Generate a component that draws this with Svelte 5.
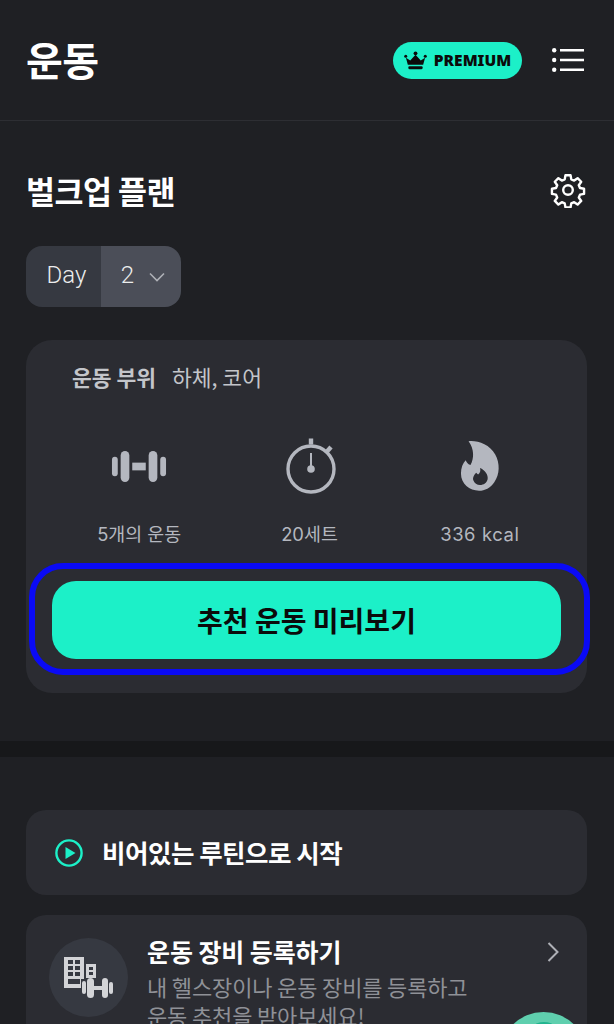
<script>
	const stats = [
		{ icon: 'dumbbell', label: '5개의 운동' },
		{ icon: 'timer', label: '20세트' },
		{ icon: 'flame', label: '336 kcal' }
	];
</script>

<div class="page">
	<header class="top">
		<h1>운동</h1>
		<div class="top-actions">
			<div class="premium">
				<svg width="23" height="19" viewBox="0 0 24 19" fill="#0b0b0b">
					<circle cx="12" cy="2" r="2" />
					<circle cx="1.8" cy="5" r="1.6" />
					<circle cx="22.2" cy="5" r="1.6" />
					<path d="M2 6.5l4.5 3L12 3.5l5.5 6 4.5-3-2 7.5H4z" />
					<rect x="4.5" y="15.5" width="15" height="3" rx="1.2" />
				</svg>
				<span>PREMIUM</span>
			</div>
			<svg width="32" height="24" viewBox="0 0 32 24" fill="none" stroke="#fff">
				<circle cx="2.2" cy="2.2" r="2.2" fill="#fff" stroke="none" />
				<circle cx="2.2" cy="12" r="2.2" fill="#fff" stroke="none" />
				<circle cx="2.2" cy="21.8" r="2.2" fill="#fff" stroke="none" />
				<path d="M8 2.2h24M8 12h24M8 21.8h24" stroke-width="2.6" />
			</svg>
		</div>
	</header>

	<section class="plan">
		<div class="plan-head">
			<h2>벌크업 플랜</h2>
			<svg width="36" height="36" viewBox="0 0 24 24" fill="none" stroke="#fff" stroke-width="1.6" stroke-linejoin="round">
				<circle cx="12" cy="12" r="3.2" />
				<path d="M10.3 2.2h3.4l.5 2.7 1.9.8 2.3-1.6 2.4 2.4-1.6 2.3.8 1.9 2.7.5v3.4l-2.7.5-.8 1.9 1.6 2.3-2.4 2.4-2.3-1.6-1.9.8-.5 2.7h-3.4l-.5-2.7-1.9-.8-2.3 1.6-2.4-2.4 1.6-2.3-.8-1.9-2.7-.5v-3.4l2.7-.5.8-1.9-1.6-2.3 2.4-2.4 2.3 1.6 1.9-.8z" />
			</svg>
		</div>

		<div class="day">
			<span class="day-label">Day</span>
			<span class="day-value">
				2
				<svg width="16" height="10" viewBox="0 0 16 10" fill="none" stroke="#aeb0b6" stroke-width="1.6">
					<path d="M1 1.5l7 7 7-7" />
				</svg>
			</span>
		</div>

		<div class="summary">
			<p class="parts"><strong>운동 부위</strong><span>하체, 코어</span></p>
			<div class="stats">
				{#each stats as stat}
					<div class="stat">
						<div class="stat-icon">
							{#if stat.icon === 'dumbbell'}
								<svg width="56" height="33" viewBox="0 0 58 34" fill="#b4b7bf">
									<rect x="1" y="7" width="6" height="20" rx="3" />
									<rect x="10" y="1" width="9" height="32" rx="4.5" />
									<rect x="22" y="13" width="14" height="8" />
									<rect x="39" y="1" width="9" height="32" rx="4.5" />
									<rect x="51" y="7" width="6" height="20" rx="3" />
								</svg>
							{:else if stat.icon === 'timer'}
								<svg class="timer" width="50" height="56" viewBox="0 0 50 56" fill="none" stroke="#b4b7bf">
									<circle cx="25" cy="31" r="23" stroke-width="3.4" />
									<path d="M25 0.5v6M45 9l-4 4.5" stroke-width="4.4" />
									<path d="M25 15v15" stroke-width="2" />
									<circle cx="25" cy="31" r="3.8" fill="#b4b7bf" stroke="none" />
								</svg>
							{:else}
								<svg width="40" height="52" viewBox="0 0 42 54" fill="#b4b7bf">
									<path fill-rule="evenodd" d="M9 1c9-1 22 3 28 14 5 9 5 21-1 29-4 6-10 9-16 9C10 53 1 46 1 35c0-6 2-11 5-14 1 2 2 4 5 5C15 19 15 9 9 1zM21 29c1 3 0 5-2 7-1-1-1-1-2-2-2 2-4 5-3 8 1 3 4 5 7 5 4 0 7-2 8-6 1-5-3-10-8-12z" />
								</svg>
							{/if}
						</div>
						<span class:latin={stat.icon === 'flame'}>{stat.label}</span>
					</div>
				{/each}
			</div>
			<button class="preview">추천 운동 미리보기</button>
			<div class="highlight"></div>
		</div>
	</section>

	<div class="band"></div>

	<section class="more">
		<div class="empty-routine">
			<svg width="28" height="28" viewBox="0 0 28 28">
				<circle cx="14" cy="14" r="12.6" fill="none" stroke="#1cf0c8" stroke-width="2.4" />
				<path d="M10.5 8l10 6-10 6z" fill="#1cf0c8" />
			</svg>
			<span>비어있는 루틴으로 시작</span>
		</div>

		<div class="equipment">
			<div class="gear-badge">
				<svg width="49" height="41" viewBox="0 0 49 41" fill="#d3d4d7">
					<path fill-rule="evenodd" d="M0 0h20v31H0zM4 3v4h5V3zm7 0v4h5V3zM4 9v4h5V9zm7 0v4h5V9zM4 15v4h5v-4zm7 0v4h5v-4zM4 22v5h12v-5z" />
					<path fill-rule="evenodd" d="M22 7h10v14H22zM25 10v3h4v-3zm0 5v3h4v-3z" />
					<rect x="17" y="22" width="24" height="19" fill="#363941" />
					<rect x="18" y="24" width="4" height="13" rx="2" />
					<rect x="23" y="21" width="7" height="20" rx="3.5" />
					<rect x="30" y="29" width="8" height="4" />
					<rect x="38" y="21" width="6" height="20" rx="3" />
					<rect x="45" y="25" width="4" height="12" rx="2" />
				</svg>
			</div>
			<div class="equipment-text">
				<h3>운동 장비 등록하기</h3>
				<p>내 헬스장이나 운동 장비를 등록하고<br />운동 추천을 받아보세요!</p>
			</div>
			<svg class="chevron" width="12" height="20" viewBox="0 0 12 20" fill="none" stroke="#aeb0b6" stroke-width="2">
				<path d="M1.5 1l9 9-9 9" />
			</svg>
			<div class="fab"><div class="fab-core"></div></div>
		</div>
	</section>
</div>

<style>
	:global(body) {
		background: #1f2024;
		overflow: hidden;
	}
	.page {
		height: 1024px;
		overflow: hidden;
		font-family: 'Noto Sans CJK KR', 'Noto Sans', sans-serif;
		color: #fff;
	}
	h1,
	h2,
	h3,
	p {
		margin: 0;
	}
	.top {
		height: 121px;
		box-sizing: border-box;
		padding: 0 30px 0 26px;
		display: flex;
		align-items: center;
		justify-content: space-between;
		border-bottom: 1px solid #2d2e33;
	}
	h1 {
		font-size: 40px;
		font-weight: 700;
		line-height: 1;
		letter-spacing: -0.5px;
		margin-top: -3px;
	}
	.top-actions {
		display: flex;
		align-items: center;
		gap: 30px;
	}
	.premium {
		width: 129px;
		height: 37px;
		border-radius: 19px;
		background: #1cf0c8;
		display: flex;
		align-items: center;
		justify-content: center;
		gap: 7px;
		color: #0b0b0b;
	}
	.premium span {
		font-family: 'Noto Sans', sans-serif;
		font-size: 15.5px;
		font-weight: 900;
	}
	.plan {
		height: 620px;
		box-sizing: border-box;
		padding: 49px 27px 0 26px;
	}
	.plan-head {
		display: flex;
		align-items: center;
		justify-content: space-between;
		height: 40px;
		padding-right: 1px;
	}
	h2 {
		font-size: 31.5px;
		font-weight: 700;
		letter-spacing: -0.5px;
		line-height: 40px;
	}
	.day {
		margin-top: 36px;
		width: 155px;
		height: 61px;
		border-radius: 16px;
		overflow: hidden;
		display: flex;
		font-size: 24px;
		font-family: 'Roboto', sans-serif;
		font-weight: 300;
		color: #eceded;
	}
	.day-label {
		width: 75px;
		box-sizing: border-box;
		padding: 0 0 3px 6px;
		background: #363941;
		display: flex;
		align-items: center;
		justify-content: center;
	}
	.day-value {
		flex: 1;
		box-sizing: border-box;
		padding: 0 0 3px 4px;
		background: #4b4e58;
		display: flex;
		align-items: center;
		justify-content: center;
		gap: 15px;
	}
	.day-value svg {
		margin-top: 3px;
	}
	.summary {
		position: relative;
		margin-top: 33px;
		height: 353px;
		box-sizing: border-box;
		padding: 22px 26px 0;
		border-radius: 26px;
		background: #2b2c32;
	}
	.parts {
		display: flex;
		align-items: center;
		gap: 16px;
		padding-left: 20px;
		font-size: 21.5px;
		color: #c3c5ca;
		height: 29px;
	}
	.parts strong {
		font-weight: 700;
	}
	.stats {
		margin: 47px -4px 0 2px;
		display: grid;
		grid-template-columns: repeat(3, 1fr);
	}
	.stat {
		display: flex;
		flex-direction: column;
		align-items: center;
		gap: 27px;
		font-size: 18.4px;
		color: #b4b7bf;
	}
	.stat-icon {
		height: 56px;
		display: flex;
		align-items: center;
		justify-content: center;
	}
	.timer {
		margin-left: 4px;
	}
	.stat span {
		line-height: 26px;
		font-family: 'Inter', 'Noto Sans CJK KR', sans-serif;
	}
	.stat span.latin {
		letter-spacing: 0.6px;
	}
	.preview {
		display: block;
		margin-top: 34px;
		width: 509px;
		height: 78px;
		border: 0;
		border-radius: 24px;
		background: #1cf0c8;
		color: #0b0b0b;
		font: 700 28px 'Noto Sans CJK KR', sans-serif;
	}
	.highlight {
		position: absolute;
		left: 3px;
		top: 223px;
		width: 561px;
		height: 112px;
		box-sizing: border-box;
		border: 6px solid #0a0af5;
		border-radius: 34px;
	}
	.band {
		height: 16px;
		background: #17181a;
	}
	.more {
		padding: 53px 27px 0 26px;
		display: flex;
		flex-direction: column;
		gap: 20px;
	}
	.empty-routine {
		height: 85px;
		box-sizing: border-box;
		padding-left: 29px;
		border-radius: 20px;
		background: #2b2c32;
		display: flex;
		align-items: center;
		gap: 19px;
		font-size: 25.5px;
		font-weight: 700;
		letter-spacing: -0.5px;
	}
	.empty-routine span {
		padding-bottom: 3px;
	}
	.equipment {
		position: relative;
		height: 200px;
		box-sizing: border-box;
		padding: 22px 23px 23px;
		border-radius: 20px;
		background: #2b2c32;
		display: flex;
		gap: 19px;
		overflow: hidden;
	}
	.gear-badge {
		width: 79px;
		height: 79px;
		margin-top: 1px;
		border-radius: 50%;
		background: #363941;
		display: flex;
		align-items: center;
		justify-content: center;
		flex: none;
	}
	.equipment-text {
		flex: 1;
	}
	h3 {
		font-size: 25px;
		font-weight: 700;
		line-height: 28px;
		letter-spacing: -0.1px;
	}
	.equipment-text p {
		margin-top: 7px;
		font-size: 22px;
		line-height: 29px;
		color: #8f9197;
		letter-spacing: -0.15px;
	}
	.chevron {
		position: absolute;
		right: 28px;
		top: 27px;
	}
	.fab {
		position: absolute;
		right: 0;
		top: 97px;
		width: 87px;
		height: 87px;
		border-radius: 50%;
		background: #5fcfae;
		display: flex;
		justify-content: center;
		padding-top: 10px;
		box-sizing: border-box;
	}
	.fab-core {
		width: 36px;
		height: 36px;
		border-radius: 50%;
		background: #22b48f;
	}
</style>
